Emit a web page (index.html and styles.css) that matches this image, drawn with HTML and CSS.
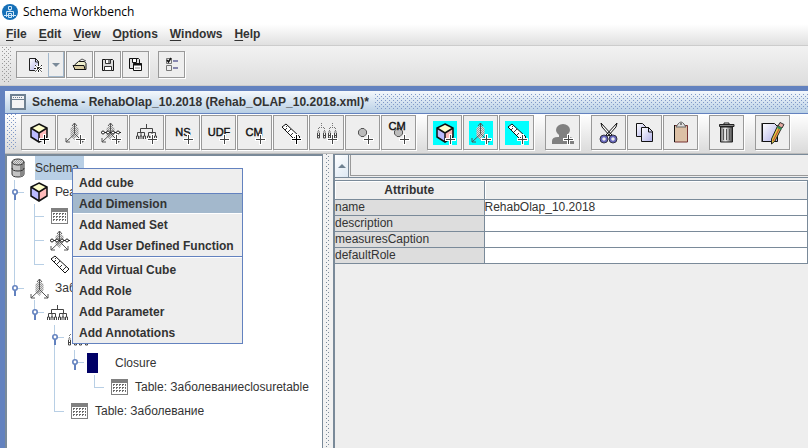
FILE: index.html
```html
<!DOCTYPE html>
<html lang="en">
<head>
<meta charset="utf-8">
<title>Schema Workbench</title>
<link rel="stylesheet" href="styles.css">
</head>
<body>
<svg class="defs" aria-hidden="true">
  <defs>
    <pattern id="dots" width="2" height="2" patternUnits="userSpaceOnUse"><rect width="2" height="2" fill="#ddd"/><rect width="1" height="1" fill="#999"/><rect x="1" y="1" width="1" height="1" fill="#999"/></pattern>
    <linearGradient id="page" x2="1" y2="1"><stop offset="0" stop-color="#fff"/><stop offset="1" stop-color="#b0b0ea"/></linearGradient>
    <linearGradient id="metal"><stop offset="0" stop-color="#777"/><stop offset=".4" stop-color="#eee"/><stop offset="1" stop-color="#444"/></linearGradient>
  </defs>
  <symbol id="plus" viewBox="0 0 33 33"><path d="M22.500 18v11M17 23.500h11" stroke="#fff" stroke-width="3"/><path d="M22.500 19v9M18 23.500h9" stroke="currentColor"/></symbol>
  <symbol id="cube" viewBox="0 0 18 20"><path d="M9 1l8 4-8 5-8-5z" fill="#ffc"/><path d="M1 5l8 5v9l-8-5z" fill="#bbf"/><path d="M17 5l-8 5v9l8-5z" fill="#fbb"/><path d="M9 1l8 4v9l-8 5-8-5V5zM1 5l8 5 8-5M9 10v9" fill="none" stroke="#111" stroke-width="1.500"/></symbol>
  <symbol id="axes" viewBox="0 0 20 21"><path d="M9.500 3l4 3v6l-4 6-4-4V6z" fill="url(#dots)"/><path d="M9.500 1v11L1 20M10 12l8 8M7 4l2.500-3L12 4M1 16v4h4M14 20h4v-4" fill="none" stroke="#555"/></symbol>
  <symbol id="cubeaxes" viewBox="0 0 20 21"><path d="M9.500 3l4 3v6l-4 6-4-4V6z" fill="url(#dots)"/><path d="M9.500 1v11L1 20M10 12l8 8M7 4l2.500-3L12 4M1 16v4h4M14 20h4v-4" fill="none" stroke="#555"/><path d="M0 10.500h20" stroke="#222"/><g fill="#fff" stroke="#222"><circle cx="2" cy="10.500" r="1.500"/><circle cx="7" cy="10.500" r="1.500"/><circle cx="12" cy="10.500" r="1.500"/><circle cx="17" cy="10.500" r="1.500"/></g></symbol>
  <symbol id="tree" viewBox="0 0 21 16"><path d="M10.500 0v4M4.500 8V4.500h12V8M1.500 12V8.500h7V12M12.500 12V8.500h7V12M5 8v4M16 8v4" fill="none" stroke="#444"/><path d="M.5 15v-3h2v3M4 15v-3h2v3M7.500 15v-3h2v3M11.500 15v-3h2v3M15 15v-3h2v3M18.500 15v-3h2v3" fill="none" stroke="#444"/></symbol>
  <symbol id="levels" viewBox="0 0 22 18"><path d="M5.500 1v4M2.500 9V5.500h6V9M16.500 1v4M13.500 9V5.500h6V9" fill="none" stroke="#777" stroke-dasharray="1 1"/><path d="M1 10h3M7 10h3M12 10h3M18 10h3" stroke="#777"/><path d="M1.500 11v5h2v-5M7.500 11v5h2v-5M12.500 11v5h2v-5M18.500 11v5h2v-5M1 13.500h3M7 13.500h3M12 13.500h3M18 13.500h3" fill="none" stroke="#444"/></symbol>
  <symbol id="ruler" viewBox="0 0 20 19"><path d="M1 4l4-3 14 13-4 4z" fill="#fff" stroke="#111"/><path d="M4 7l2-2M7 9l3-3M10 12l2-2M13 15l3-3M6 3l-1 1" stroke="#333"/></symbol>
  <symbol id="diamond" viewBox="0 0 9 9"><path d="M3 .5h3L8.500 3v3L6 8.500H3L.5 6V3z" fill="#bbb" stroke="#555"/></symbol>
  <symbol id="table" viewBox="0 0 17 16"><path d="M0 0h17v16H0z" fill="#808080"/><path d="M1 4h15v11H1z" fill="#fff"/><path d="M2 5.500h13M2 8.500h13M2 11.500h13" stroke="#666" stroke-dasharray="2 1"/><path d="M2.500 6v1M5.500 6v1M8.500 6v1M11.500 6v1M14.500 6v1M2.500 9v1M5.500 9v1M8.500 9v1M11.500 9v1M14.500 9v1M2.500 12v1M5.500 12v1M8.500 12v1M11.500 12v1M14.500 12v1" stroke="#777"/></symbol>
  <symbol id="knob" viewBox="0 0 20 24"><path d="M5 12.500h9" stroke="#b8cfe5"/><path d="M5 14v6" stroke="#6382bf" stroke-width="2"/><circle cx="5" cy="12" r="2.200" fill="#fff" stroke="#6382bf" stroke-width="1.600"/></symbol>
</svg>

<div class="app">
  <header class="titlebar">
    <svg class="logo" width="16" height="16" viewBox="0 0 16 16"><circle cx="8" cy="8" r="8" fill="#1670b8"/><path d="M6.500 2.500h3v3h-3zM8 5.500v2M4.500 13V7.500h7V13M2 11.500h12M6.500 9.500h3v4h-3z" fill="none" stroke="#cfe6f8"/></svg>
    <span>Schema Workbench</span>
  </header>
  <nav class="menubar">
    <button><u>F</u>ile</button><button><u>E</u>dit</button><button><u>V</u>iew</button><button><u>O</u>ptions</button><button><u>W</u>indows</button><button><u>H</u>elp</button>
  </nav>
  <div class="toolbar main-tools">
    <i class="grip"></i>
    <button class="tool split" aria-label="New">
      <svg width="47" height="25" viewBox="0 0 47 25"><path d="M12.500 6.500h6l3 3v9h-9z" fill="url(#page)" stroke="#222"/><path d="M18.500 6v4H22" fill="none" stroke="#222"/><path d="M21.500 12v9M17 16.500h9M18 13l7 7M25 13l-7 7" stroke="#fff" stroke-width="2"/><path d="M21.500 12v9M17 16.500h9M18 13l7 7M25 13l-7 7" stroke="#222" stroke-dasharray="2 1"/><path d="M31.500 1v23M46.500 0v25M31 24.500h16" stroke="#a3b8cc"/><path d="M35 11h8l-4 4z" fill="#7a8a99"/></svg>
    </button>
    <button class="tool small" aria-label="Open"><svg width="25" height="25" viewBox="0 0 25 25"><path d="M7.500 17.500V13l4-3.500h6l1.500 2v6z" fill="#eec" stroke="#111"/><path d="M6 13.500h11l1 4H8z" fill="#d8cba0" stroke="#111"/><path d="M12 9l3-2 4 2" fill="none" stroke="#555"/></svg></button>
    <button class="tool small" aria-label="Save"><svg width="25" height="25" viewBox="0 0 25 25"><path d="M7.500 7.500h10l1 1v10h-11z" fill="#ddd" stroke="#111"/><path d="M10.500 7.500h5v4h-5zM9.500 14.500h7v4h-7z" fill="#fff" stroke="#333"/><path d="M14 8v3" stroke="#111"/></svg></button>
    <button class="tool small" aria-label="Save as"><svg width="25" height="25" viewBox="0 0 25 25"><path d="M6.500 6.500h9l1 1v9h-10z" fill="#ddd" stroke="#111"/><path d="M9.500 6.500h4v4h-4z" fill="#fff" stroke="#111"/><path d="M10.500 11.500h8v7h-8z" fill="#fff" stroke="#111"/><path d="M10 12.500h9" stroke="#111" stroke-width="2"/><path d="M12 16h5" stroke="#888"/></svg></button>
    <button class="tool small gap" aria-label="Preferences"><svg width="25" height="25" viewBox="0 0 25 25"><path d="M7.500 6.500h5v5h-5zM7.500 13.500h5v5h-5z" fill="#eee" stroke="#777"/><path d="M8 8l1.500 2L12 6" fill="none" stroke="#111" stroke-width="1.500"/><path d="M14 9h5M14 16h5" stroke="#669" stroke-width="1.500"/></svg></button>
  </div>

  <main class="frame">
    <div class="frame-title">
      <svg width="16" height="16" viewBox="0 0 16 16"><path d="M1 1h14v14H1z" fill="#f4f4f4" stroke="#6f8191" stroke-width="2"/><path d="M3 3.500h10" stroke="#6f8191" stroke-dasharray="1 1"/><path d="M2 5.500h12" stroke="#6f8191"/></svg>
      <h1>Schema - RehabOlap_10.2018 (Rehab_OLAP_10.2018.xml)*</h1>
      <i class="bumps"></i>
    </div>
    <div class="toolbar schema-tools">
      <i class="grip blue"></i>
      <button class="tool" aria-label="Add cube"><svg class="icon black"><use href="#cube" x="8" y="7" width="18" height="20"/><use href="#plus"/></svg></button>
      <button class="tool" aria-label="Add dimension"><svg class="icon"><use href="#axes" x="7" y="6" width="20" height="21"/><use href="#plus"/></svg></button>
      <button class="tool" aria-label="Add dimension usage"><svg class="icon"><use href="#cubeaxes" x="7" y="6" width="20" height="21"/><use href="#plus"/></svg></button>
      <button class="tool" aria-label="Add hierarchy"><svg class="icon"><use href="#tree" x="6" y="8" width="21" height="16"/><use href="#plus"/></svg></button>
      <button class="tool"><svg class="icon"><text x="17" y="20" class="glyph">NS</text><use href="#plus"/></svg></button>
      <button class="tool"><svg class="icon"><text x="17" y="20" class="glyph">UDF</text><use href="#plus"/></svg></button>
      <button class="tool"><svg class="icon"><text x="16" y="20" class="glyph">CM</text><use href="#plus"/></svg></button>
      <button class="tool" aria-label="Add measure"><svg class="icon black"><use href="#ruler" x="7" y="7" width="20" height="19"/><use href="#plus"/></svg></button>
      <button class="tool" aria-label="Add level"><svg class="icon"><use href="#levels" x="6" y="6" width="22" height="18"/><use href="#plus"/></svg></button>
      <button class="tool" aria-label="Add property"><svg class="icon"><use href="#diamond" x="12" y="12" width="9" height="9"/><use href="#plus"/></svg></button>
      <button class="tool"><svg class="icon"><use href="#diamond" x="12" y="12" width="9" height="9"/><text x="15" y="14" class="glyph">CM</text><use href="#plus"/></svg></button>
      <button class="tool gap" aria-label="Add virtual cube"><svg class="icon"><path class="cyan" d="M5 5h24v24H5z"/><use href="#cube" x="8" y="7" width="18" height="20"/><use href="#plus"/></svg></button>
      <button class="tool" aria-label="Add virtual cube dimension"><svg class="icon"><path class="cyan" d="M5 5h24v24H5z"/><use href="#axes" x="7" y="6" width="20" height="21"/><use href="#plus"/></svg></button>
      <button class="tool" aria-label="Add virtual cube measure"><svg class="icon"><path class="cyan" d="M5 5h24v24H5z"/><use href="#ruler" x="7" y="7" width="20" height="19"/><use href="#plus"/></svg></button>
      <button class="tool gap" aria-label="Add role"><svg class="icon"><g fill="#808080"><ellipse cx="17" cy="14" rx="7" ry="6"/><path d="M13 18h8v4h-8zM6 28v-3q0-4 6-4h10q6 0 6 4v3z"/></g><use href="#plus"/></svg></button>
      <button class="tool gap" aria-label="Cut"><svg class="icon"><path d="M9 7l1 4 8 9 2-1zM25 7l-1 4-8 9-2-1z" fill="#fff" stroke="#111"/><g fill="#eee" stroke="#66b" stroke-width="2"><circle cx="12" cy="23" r="2.800"/><circle cx="21" cy="23" r="2.800"/></g><g fill="none" stroke="#112" stroke-width=".8"><circle cx="12" cy="23" r="4"/><circle cx="21" cy="23" r="4"/></g></svg></button>
      <button class="tool" aria-label="Copy"><svg class="icon"><path d="M8.500 7.500h6l3 3v10h-9z" fill="url(#page)" stroke="#111"/><path d="M13.500 11.500h7l4 4v10h-11z" fill="url(#page)" stroke="#111"/><path d="M20.500 11v5H25" fill="none" stroke="#111"/></svg></button>
      <button class="tool" aria-label="Paste"><svg class="icon"><path d="M10.500 9.500h13v16.500h-13z" fill="#dcc0a5" stroke="#733"/><path d="M10.500 9v17" stroke="#111"/><path d="M12 11l2-3q3-4 6 0l2 3z" fill="#ddd" stroke="#666"/><path d="M17 7v2" stroke="#222"/></svg></button>
      <button class="tool gap" aria-label="Delete"><svg class="icon"><path d="M10.500 11h12v15h-12z" fill="url(#metal)" stroke="#222"/><path d="M13.500 13v11M16.500 13v11M19.500 13v11" stroke="#555"/><path d="M9.500 8.500h14.500v2H9.500z" fill="#888" stroke="#222"/><path d="M14 8V7h5v1" fill="none" stroke="#222"/></svg></button>
      <button class="tool gap" aria-label="Edit"><svg class="icon"><path d="M6.500 7.500h12l3 3v15h-15z" fill="url(#page)" stroke="#111"/><path d="M6 7v19" stroke="#111"/><path d="M22 9l4 2-7 14-3.500 3V23z" fill="#dc4" stroke="#222"/><path d="M24 11l-7 14" stroke="#c33"/><path d="M22 10l2-3.500 4 2-2 3.500z" fill="#e3a8a0" stroke="#333"/><path d="M21.500 11l4 2" stroke="#385" stroke-width="2"/></svg></button>
    </div>

    <div class="workspace">
      <section class="tree-pane">
        <ul class="tree">
          <li class="row"><span class="pic"><svg width="16" height="20" viewBox="0 0 16 20"><path d="M2 4v12q0 3 6 3t6-3V4" fill="#c4c4c4" stroke="#333"/><path d="M10 7v12q4-1 4-3V4z" fill="#888"/><ellipse cx="8" cy="4" rx="6" ry="3" fill="url(#dots)" stroke="#333"/><path d="M2 10q0 3 6 3t6-3" fill="none" stroke="#333"/></svg></span><span class="label selected">Schema</span></li>
          <li class="row"><i class="line"><svg class="knob"><use href="#knob"/></svg></i><span class="pic"><svg width="18" height="20"><use href="#cube"/></svg></span><span class="label">Реа</span></li>
          <li class="row"><i class="line"></i><i class="line tee"></i><span class="pic in"><svg width="17" height="16"><use href="#table"/></svg></span></li>
          <li class="row"><i class="line"></i><i class="line tee"></i><span class="pic"><svg width="20" height="21"><use href="#cubeaxes"/></svg></span></li>
          <li class="row"><i class="line"></i><i class="line end"></i><span class="pic"><svg width="20" height="19"><use href="#ruler"/></svg></span></li>
          <li class="row"><i class="line half"><svg class="knob"><use href="#knob"/></svg></i><span class="pic"><svg width="20" height="21"><use href="#axes"/></svg></span><span class="label">Заб</span></li>
          <li class="row tall"><i></i><i class="line half"><svg class="knob"><use href="#knob"/></svg></i><span class="pic wide"><svg width="21" height="16"><use href="#tree"/></svg></span></li>
          <li class="row tall"><i></i><i></i><i class="line"><svg class="knob"><use href="#knob"/></svg></i><span class="pic wide"><svg width="22" height="18"><use href="#levels"/></svg></span></li>
          <li class="row tall"><i></i><i></i><i class="line"></i><i class="line half"><svg class="knob"><use href="#knob"/></svg></i><span class="pic wide"><b class="closure"></b></span><span class="label">Closure</span></li>
          <li class="row"><i></i><i></i><i class="line"></i><i></i><i class="line end"></i><span class="pic in"><svg width="17" height="16"><use href="#table"/></svg></span><span class="label">Table: Заболеваниеclosuretable</span></li>
          <li class="row"><i></i><i></i><i class="line end"></i><span class="pic in"><svg width="17" height="16"><use href="#table"/></svg></span><span class="label">Table: Заболевание</span></li>
        </ul>
        <div class="popup">
          <button>Add cube</button><button class="active">Add Dimension</button><button>Add Named Set</button><button>Add User Defined Function</button>
          <hr>
          <button>Add Virtual Cube</button><button>Add Role</button><button>Add Parameter</button><button>Add Annotations</button>
        </div>
      </section>
      <i class="divider"></i>
      <section class="detail">
        <div class="scroll"><button class="up" aria-label="Scroll up"><svg width="8" height="4" viewBox="0 0 8 4"><path d="M4 0l4 4H0z" fill="#6f8191"/></svg></button><div class="track"></div></div>
        <table>
          <colgroup><col class="key"><col></colgroup>
          <thead><tr><th>Attribute</th><th></th></tr></thead>
          <tbody>
            <tr><th>name</th><td>RehabOlap_10.2018</td></tr>
            <tr><th>description</th><td></td></tr>
            <tr><th>measuresCaption</th><td></td></tr>
            <tr><th>defaultRole</th><td></td></tr>
          </tbody>
        </table>
      </section>
    </div>
  </main>
</div>
</body>
</html>
```
FILE: styles.css
```css
* { box-sizing: border-box; }
body { margin: 0; font: 12px/16px "Liberation Sans", Arial, sans-serif; color: #333; background: #eee; }
button { font: inherit; color: inherit; margin: 0; padding: 0; border: 0; background: none; }
svg { display: block; flex: none; }
i { display: block; flex: none; }
.defs { position: absolute; width: 0; height: 0; }
.app { display: flex; flex-direction: column; min-height: 100vh; overflow: hidden; }

.titlebar { display: flex; align-items: center; gap: 5px; height: 24px; padding-left: 2px; background: #fff; color: #000; font-family: "Open Sans", "Noto Sans", sans-serif; }
.menubar { display: flex; gap: 12px; height: 22px; padding-left: 6px; font-weight: bold; background: linear-gradient(#fff, #e0e0e0); border-bottom: 1px solid #ccc; }
.menubar button { height: 20px; white-space: nowrap; }
.menubar u { text-underline-offset: 2px; }

.toolbar { display: flex; align-items: center; gap: 1px; background: linear-gradient(#fff, #dadada); }
.main-tools { height: 40px; padding: 0 2px 2px; background: linear-gradient(#f2f2f2, #ddd); border-bottom: 1px solid #ccc; }
.grip, .bumps, .divider {
  --dot: #999;
  background-image: conic-gradient(from 270deg at 1px 1px, var(--dot) 90deg, transparent 0), conic-gradient(from 270deg at 1px 1px, var(--dot) 90deg, transparent 0);
  background-size: 4px 4px;
  background-position: 0 0, 2px 2px;
}
.grip { width: 10px; height: 36px; margin-right: 3px; }
.blue, .bumps { --dot: #7f98c8; }
.tool { flex: none; width: 35px; height: 35px; border: 1px solid #999; background: #eee; box-shadow: 1px 1px #fff; }
.tool.small { width: 27px; height: 27px; }
.tool.split { width: 49px; height: 27px; }
.main-tools .gap { margin-left: 8px; }
.schema-tools .gap { margin-left: 10px; }
.icon { width: 33px; height: 33px; color: #444; }
.icon.black { color: #000; }
.cyan { fill: #0ff; }
.glyph { font-size: 11px; text-anchor: middle; fill: #111; stroke: #111; stroke-width: 0.4px; }

.frame { flex: 1; display: flex; flex-direction: column; border: solid #6382bf; border-width: 5px 0 0 5px; }
.frame-title { display: flex; align-items: center; height: 23px; padding: 0 0 0 5px; background: linear-gradient(#f4f8fc, #b8cfe5); border-bottom: 1px solid #6382bf; }
.frame-title h1 { margin: 0 6px; font-size: 12px; white-space: nowrap; }
.bumps { flex: 1; height: 16px; }
.schema-tools { height: 40px; padding: 0 2px 3px; border-bottom: 1px solid #bbb; }

.workspace { flex: 1; display: grid; grid-template-columns: 318px 10px minmax(0, 1fr); }
.tree-pane { position: relative; background: #fff; border: solid #7a8a99; border-width: 2px 1px 0 2px; }
.tree { margin: 0; padding: 0 0 0 3px; list-style: none; }
.row { display: flex; height: 24px; }
.row.tall { height: 25px; }
.row i { width: 20px; background-repeat: no-repeat; }
.line { background-image: linear-gradient(#b8cfe5, #b8cfe5); background-size: 1px 100%; background-position: 4px 0; }
.line.half { background-size: 1px 50%; }
.line.tee, .line.end { background-image: linear-gradient(#b8cfe5, #b8cfe5), linear-gradient(#b8cfe5, #b8cfe5); background-size: 1px 100%, 10px 1px; background-position: 4px 0, 4px 12px; }
.line.end { background-size: 1px 50%, 10px 1px; }
.knob { width: 20px; height: 24px; }
.pic { display: flex; align-items: center; flex: none; width: 25px; }
.pic.in { padding-left: 1px; }
.pic.wide { width: 28px; margin-left: -3px; }
.closure { width: 11px; height: 20px; background: #006; }
.label { padding: 4px 0; white-space: nowrap; }
.tall .label { padding-top: 5px; }
.selected { width: 49px; background: #b8cfe5; }

.popup { position: absolute; left: 65px; top: 12px; width: 171px; padding: 3px 0 0; background: #eee; border: 1px solid #6382bf; font-weight: bold; }
.popup button { display: block; width: 100%; height: 21px; padding-left: 6px; text-align: left; white-space: nowrap; }
.popup .active { background: #a3b8cc; border-top: 1px solid #6382bf; border-bottom: 1px solid #fff; }
.popup hr { height: 3px; margin: 0; border: 0; border-top: 1px solid #6382bf; background: linear-gradient(#fff 1px, #eee 1px); }

.divider { --dot: #7a8a99; background-color: #f2f2f2; background-repeat: repeat-y; background-position: 3px 0, 5px 2px; }
.detail { border: solid #7a8a99; border-width: 1px 0 0 2px; background: #eee; }
.scroll { display: flex; height: 23px; border-bottom: 1px solid #7a8a99; }
.up { display: grid; place-items: center; width: 14px; border-right: 1px solid #7a8a99; background: linear-gradient(135deg, #fff, #dde8f3); }
.track { flex: 1; margin: 0 0 1px 1px; border: solid #999; border-width: 0 0 1px 1px; }
table { width: 100%; margin-top: 2px; border-collapse: collapse; table-layout: fixed; border-top: 1px solid #7a8a99; }
.key { width: 149px; }
th, td { height: 16px; padding: 0; line-height: 15px; border: solid #7a8a99; border-width: 0 1px 1px 0; text-align: left; }
td { background: #fff; }
thead th { height: 19px; text-align: center; font-weight: bold; background: #eee; box-shadow: inset 1px 1px #fff; }
tbody th { font-weight: normal; background: #ddd; }
```
